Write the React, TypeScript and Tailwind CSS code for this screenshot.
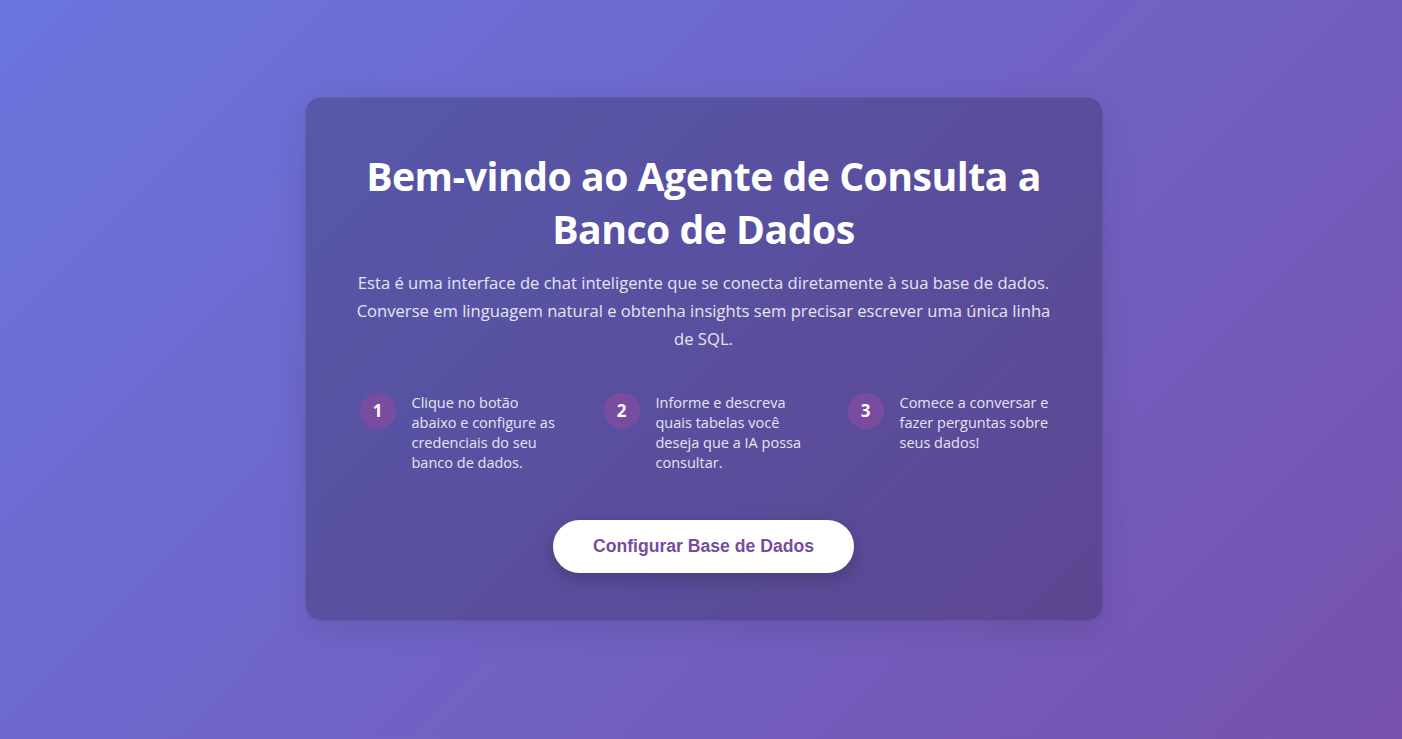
import React from "react";

const steps = [
  { n: "1", text: "Clique no botão abaixo e configure as credenciais do seu banco de dados." },
  { n: "2", text: "Informe e descreva quais tabelas você deseja que a IA possa consultar." },
  { n: "3", text: "Comece a conversar e fazer perguntas sobre seus dados!" },
];

export default function App() {
  return (
    <div
      className="min-h-screen w-full flex items-center justify-center pb-[22px] pl-[5px] bg-[linear-gradient(135deg,#6a75de_0%,#7651ad_100%)]"
      style={{ fontFamily: '"Open Sans", "Noto Sans", sans-serif' }}
    >
      <div className="w-[798px] rounded-2xl bg-black/20 border border-white/5 shadow-[0_8px_32px_rgba(0,0,0,0.1)] px-12 pt-[51px] pb-[47px] text-center">
        <h1 className="text-[39.2px] leading-[53px] font-bold text-white tracking-[-0.5px]">
          Bem-vindo ao Agente de Consulta a Banco de Dados
        </h1>
        <p className="mt-3.5 text-[16.6px] leading-[28px] text-white/85">
          Esta é uma interface de chat inteligente que se conecta diretamente à sua base de dados. Converse em linguagem natural e obtenha insights sem precisar escrever uma única linha de SQL.
        </p>
        <div className="mt-10 grid grid-cols-3 gap-8 text-left">
          {steps.map((s) => (
            <div key={s.n} className="flex items-start gap-4 pl-1.5">
              <div className="w-9 h-9 shrink-0 rounded-full bg-[#7a4c9f] flex items-center justify-center text-white font-bold text-[17px]">
                {s.n}
              </div>
              <p className="text-[14.5px] leading-[20px] text-white/85">{s.text}</p>
            </div>
          ))}
        </div>
        <div className="mt-[47px] flex justify-center">
          <button
            className="h-[53px] px-10 rounded-full bg-white text-[#764ba2] font-bold text-[17.6px] shadow-[0_6px_18px_rgba(0,0,0,0.2)]"
            style={{ fontFamily: '"Liberation Sans", Arial, sans-serif' }}
          >
            Configurar Base de Dados
          </button>
        </div>
      </div>
    </div>
  );
}
